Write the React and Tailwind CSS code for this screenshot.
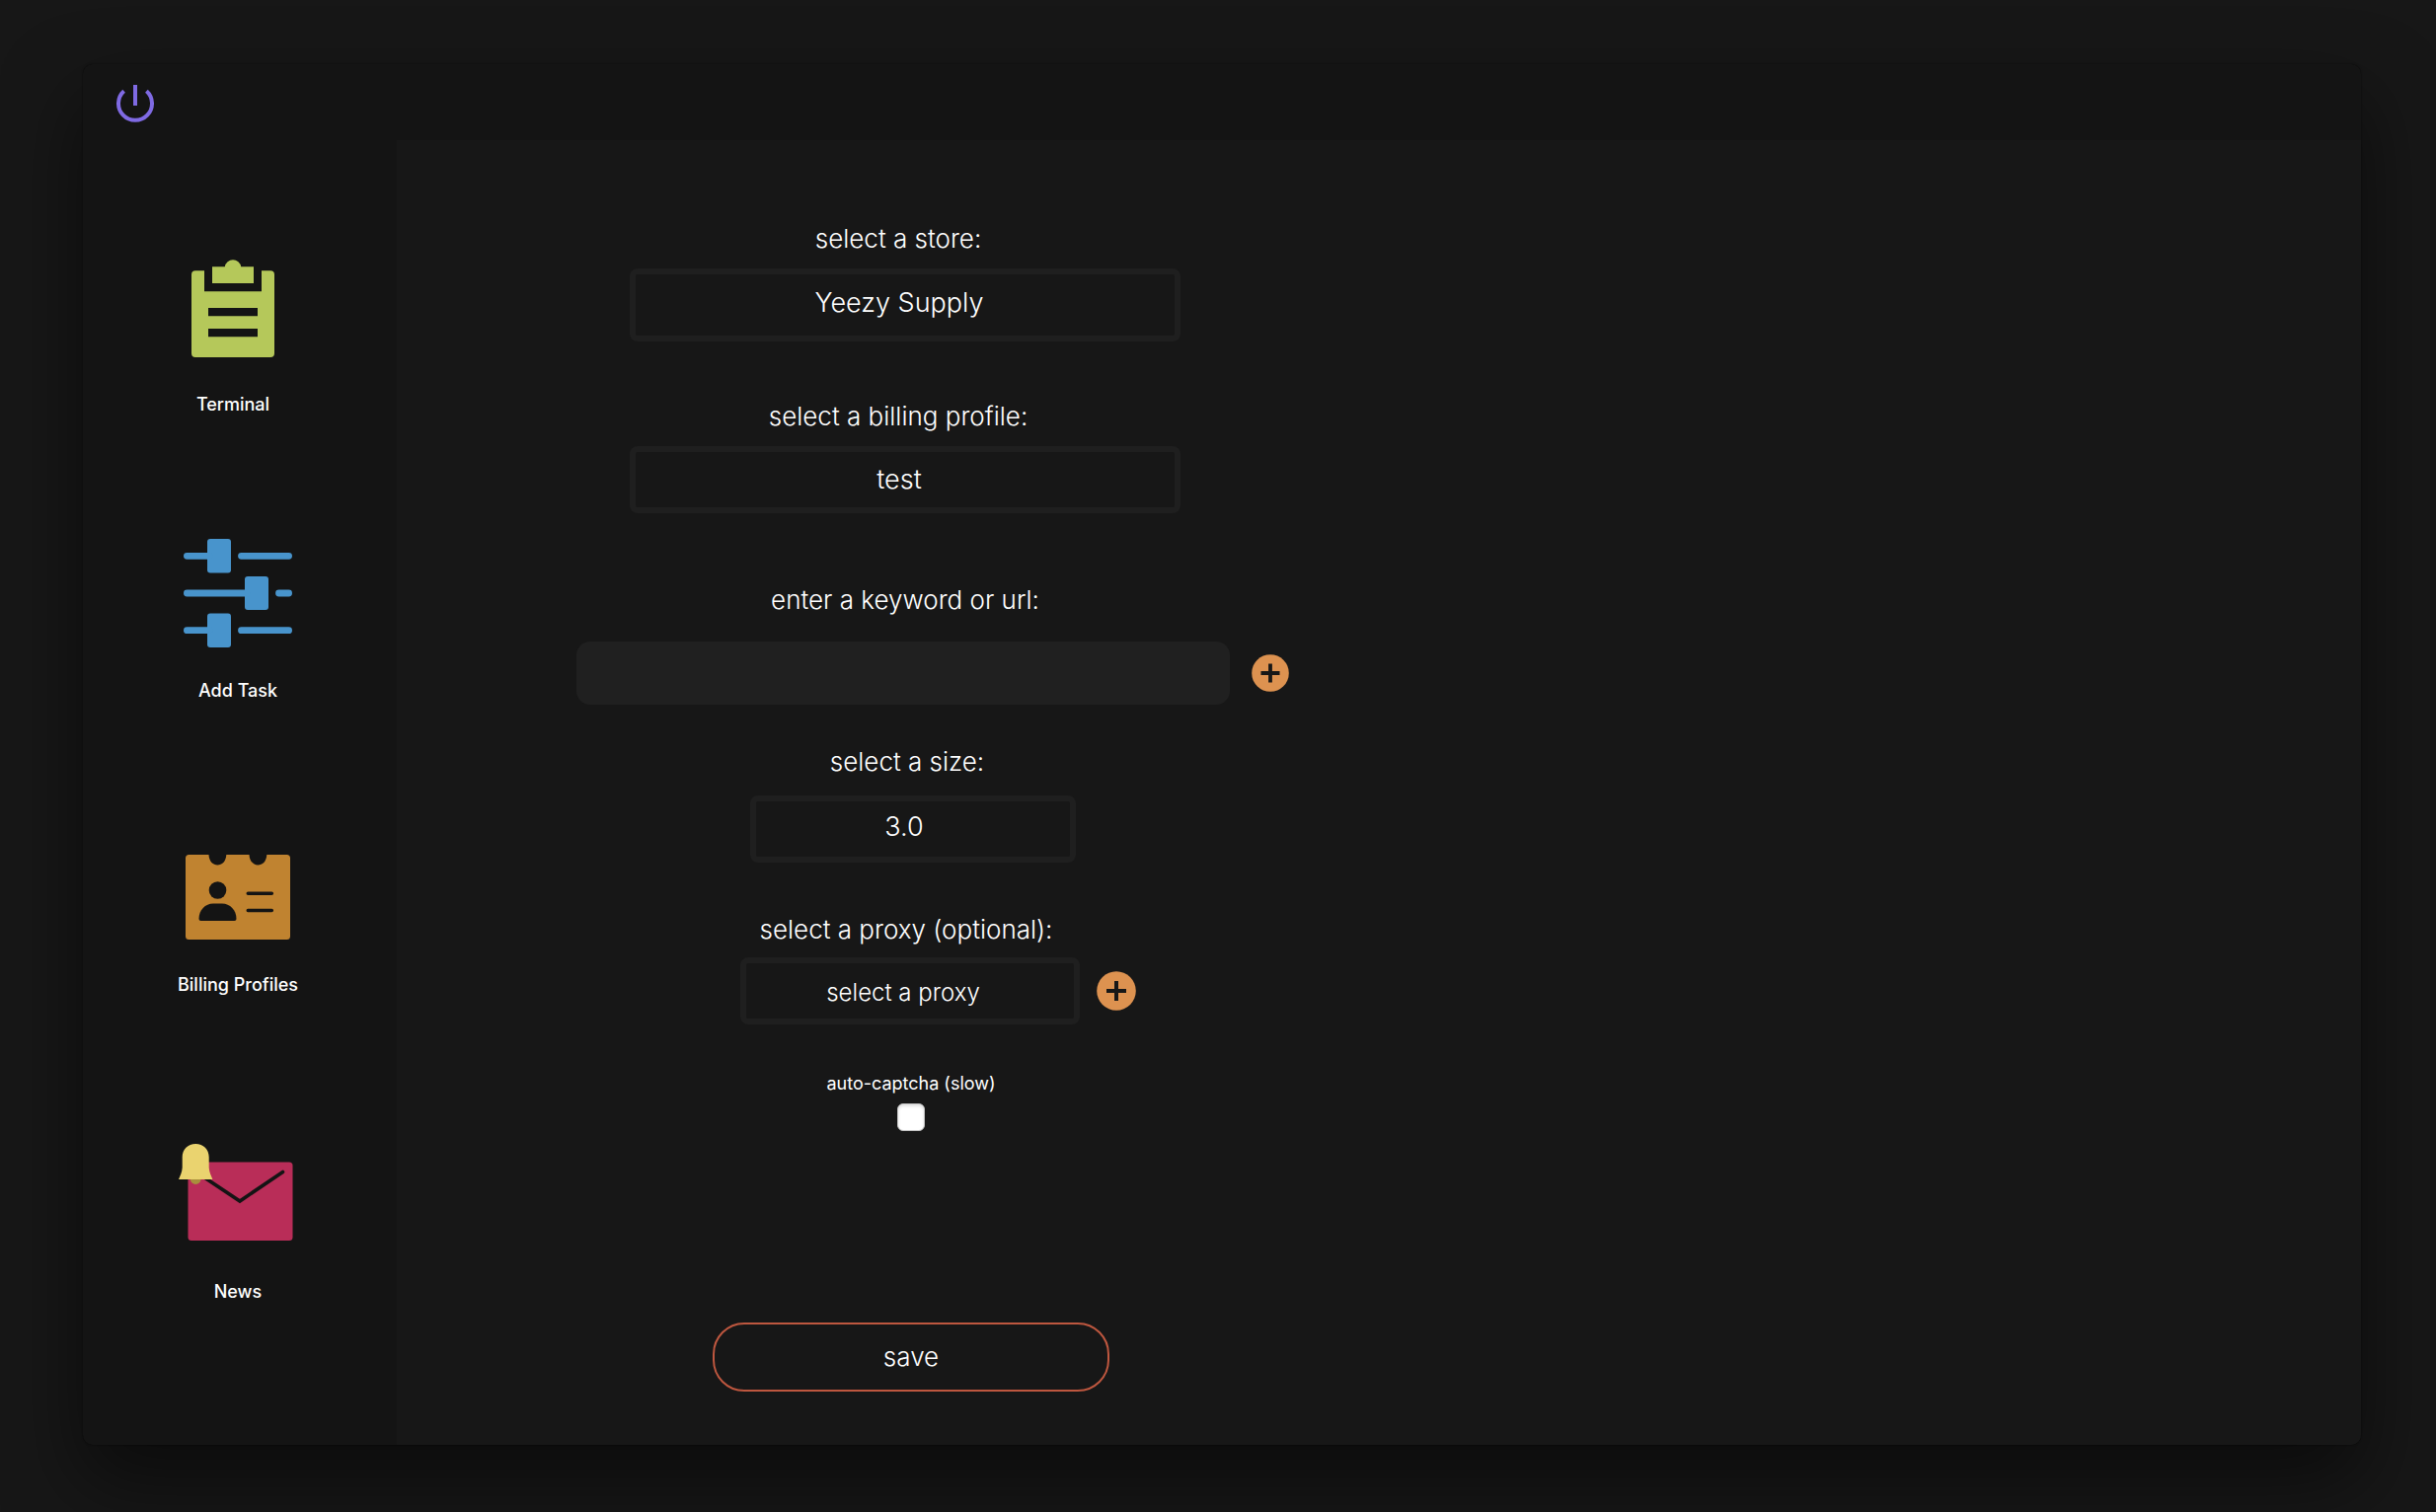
import React, { useState } from 'react';
import clsx from 'clsx';

const PowerIcon = () => (
  <svg width="38" height="38" viewBox="0 0 38 38" fill="none" stroke="#7f6ae3" strokeWidth="4">
    <path d="M19 0V21" />
    <path d="M7.6 6.2A17 17 0 1 0 30.4 6.2" />
  </svg>
);

const ClipboardIcon = () => (
  <svg width="84" height="100" viewBox="0 0 84 100" fill="#b5c85a">
    <path d="M21 8.3H33.8A8.3 8.3 0 0 1 50.2 8.3H63V25H21Z" />
    <path
      fillRule="evenodd"
      d="M4 12.2H13V33.3H71V12.2H80A4 4 0 0 1 84 16.2V96A4 4 0 0 1 80 100H4A4 4 0 0 1 0 96V16.2A4 4 0 0 1 4 12.2ZM17 50V58.2H67V50ZM17 71V79.2H67V71Z"
    />
  </svg>
);

const SlidersIcon = () => (
  <svg width="110" height="110" viewBox="0 0 110 110" fill="#4894cc">
    <rect x="24" y="0" width="24" height="34.5" rx="3" />
    <rect x="62" y="38" width="24" height="34" rx="3" />
    <rect x="24" y="75.5" width="24" height="34.5" rx="3" />
    <g stroke="#4894cc" strokeWidth="6.8" strokeLinecap="round">
      <path d="M3.4 17.3H26M58.5 17.3H106.6" />
      <path d="M3.4 55H64M96.5 55H106.6" />
      <path d="M3.4 92.7H26M58.5 92.7H106.6" />
    </g>
  </svg>
);

const BillingIcon = () => (
  <svg width="106" height="86" viewBox="0 0 106 86">
    <path
      fill="#c08330"
      d="M3.5 0H23.5C24.2 14 40.6 14 41.3 0H64.5C65.2 14 81.6 14 82.3 0H102.5A3.5 3.5 0 0 1 106 3.5V82.5A3.5 3.5 0 0 1 102.5 86H3.5A3.5 3.5 0 0 1 0 82.5V3.5A3.5 3.5 0 0 1 3.5 0Z"
    />
    <g fill="#141414">
      <circle cx="32.5" cy="36" r="8.8" />
      <path d="M13.5 65C13.5 56 20 49.5 28 49.5H37C45 49.5 51.5 56 51.5 65Q51.5 67 49.5 67H15.5Q13.5 67 13.5 65Z" />
    </g>
    <path d="M63.3 39.3H87.3M63.3 56.5H87.3" stroke="#141414" strokeWidth="3.6" strokeLinecap="round" />
  </svg>
);

const NewsIcon = () => (
  <svg width="120" height="98" viewBox="0 0 120 98">
    <rect x="9.5" y="18.5" width="106" height="79.5" rx="3.5" fill="#b92d58" />
    <path d="M26 34L62 58L105.5 28.5" fill="none" stroke="#141414" strokeWidth="3.6" strokeLinecap="round" />
    <circle cx="17.2" cy="35.5" r="5.4" fill="#a88f3c" />
    <path d="M17.2 0C25 0 30.7 5.7 30.7 13.5V24C31 29 33 32.5 34.4 36H0C1.5 32.5 3.4 29 3.7 24V13.5C3.7 5.7 9.4 0 17.2 0Z" fill="#ead36f" />
  </svg>
);

const navItems = [
  { label: 'Terminal', icon: ClipboardIcon, box: 'w-[114px] mt-[120px] gap-9' },
  { label: 'Add Task', icon: SlidersIcon, box: 'w-[124px] mt-[124px] gap-8' },
  { label: 'Billing Profiles', icon: BillingIcon, box: 'w-[124px] mt-[154px] gap-[34px]' },
  { label: 'News', icon: NewsIcon, box: 'w-[124px] mt-[149px] gap-10' },
];

const AddButton = ({ label, size }) => (
  <button type="button" aria-label={label} className="shrink-0 cursor-pointer">
    <svg width={size} height={size} viewBox="0 0 40 40">
      <circle cx="20" cy="20" r="19.8" fill="#dd9250" />
      <path d="M20 10V30M10 20H30" stroke="#171717" strokeWidth="4" />
    </svg>
  </button>
);

const Label = ({ htmlFor, className, children }) => (
  <label htmlFor={htmlFor} className={clsx('block text-center text-[26px] leading-8 font-light', className)}>
    {children}
  </label>
);

const Select = ({ id, options, className }) => (
  <select
    id={id}
    className={clsx(
      'block w-full appearance-none rounded-lg border-6 border-[#1f1f1f] bg-[#171717] text-center [text-align-last:center] font-light outline-none',
      className
    )}
  >
    {options.map((o) => (
      <option key={o}>{o}</option>
    ))}
  </select>
);

export default function App() {
  const [keyword, setKeyword] = useState('');
  const [captcha, setCaptcha] = useState(false);

  return (
    <div className="flex min-h-screen overflow-hidden bg-[#171717] pt-[65px] pr-[76px] pb-[68px] pl-[84px] font-['Inter','Liberation_Sans',sans-serif] text-white">
      <div className="flex flex-1 flex-col rounded-[10px] bg-[#141414] shadow-[0_0_2px_rgba(0,0,0,0.6),0_36px_80px_rgba(0,0,0,0.5)]">
        <header className="flex h-[77px] items-start pt-[21px] pl-[34px]">
          <button type="button" aria-label="Quit" className="cursor-pointer">
            <PowerIcon />
          </button>
        </header>

        <div className="flex flex-1">
          <nav className="flex w-[318px] shrink-0 flex-col items-start pl-[95px]">
            {navItems.map(({ label, icon: Icon, box }) => (
              <button
                key={label}
                type="button"
                className={clsx('flex cursor-pointer flex-col items-center text-lg leading-6 font-medium whitespace-nowrap', box)}
              >
                <Icon />
                {label}
              </button>
            ))}
          </nav>

          <main className="flex-1 rounded-br-[10px] bg-[#171717]">
            <form className="flex flex-col items-start pt-[84px] pb-[54px] pl-[182px]" onSubmit={(e) => e.preventDefault()}>
              <div className="ml-[54px] flex w-[558px] flex-col gap-[14px]">
                <Label htmlFor="store" className="pr-[14px]">select a store:</Label>
                <Select id="store" options={['Yeezy Supply']} className="h-[74px] pr-3 pb-1 text-[27px]" />
              </div>

              <div className="mt-[60px] ml-[54px] flex w-[558px] flex-col gap-[14px]">
                <Label htmlFor="profile" className="pr-[14px]">select a billing profile:</Label>
                <Select id="profile" options={['test']} className="h-[68px] pr-3 text-[27px]" />
              </div>

              <div className="mt-[72px] grid grid-cols-[662px_auto] items-center gap-x-[22px] gap-y-[26px]">
                <Label htmlFor="keyword" className="pl-1">enter a keyword or url:</Label>
                <input
                  id="keyword"
                  type="text"
                  value={keyword}
                  onChange={(e) => setKeyword(e.target.value)}
                  className="col-start-1 h-16 w-full rounded-[14px] bg-[#202020] px-5 text-[26px] font-light outline-none"
                />
                <AddButton label="add keyword" size={38} />
              </div>

              <div className="mt-[42px] ml-[176px] flex w-[330px] flex-col gap-[18px]">
                <Label htmlFor="size" className="pr-3">select a size:</Label>
                <Select id="size" options={['3.0']} className="h-[68px] pr-[18px] pb-1 text-[27px]" />
              </div>

              <div className="mt-[52px] ml-[166px] grid grid-cols-[344px_auto] items-center gap-x-[17px] gap-y-3">
                <Label htmlFor="proxy" className="pr-2">select a proxy (optional):</Label>
                <Select id="proxy" options={['select a proxy']} className="col-start-1 h-[68px] pt-1 pr-[14px] text-2xl" />
                <AddButton label="add proxy" size={40} />
              </div>

              <div className="mt-[48px] ml-[166px] flex w-[346px] flex-col items-center gap-2">
                <label htmlFor="captcha" className="text-lg leading-6">auto-captcha (slow)</label>
                <input
                  id="captcha"
                  type="checkbox"
                  checked={captcha}
                  onChange={(e) => setCaptcha(e.target.checked)}
                  className="size-7 appearance-none rounded-md border border-[#c4c4c4] bg-white shadow-[inset_0_2px_3px_rgba(0,0,0,0.12)] checked:bg-[#3b82f6]"
                />
              </div>

              <button
                type="submit"
                className="mt-[194px] ml-[138px] h-[70px] w-[402px] cursor-pointer rounded-[32px] border-2 border-[#be573f] text-[26px] leading-8 font-light"
              >
                save
              </button>
            </form>
          </main>
        </div>
      </div>
    </div>
  );
}
